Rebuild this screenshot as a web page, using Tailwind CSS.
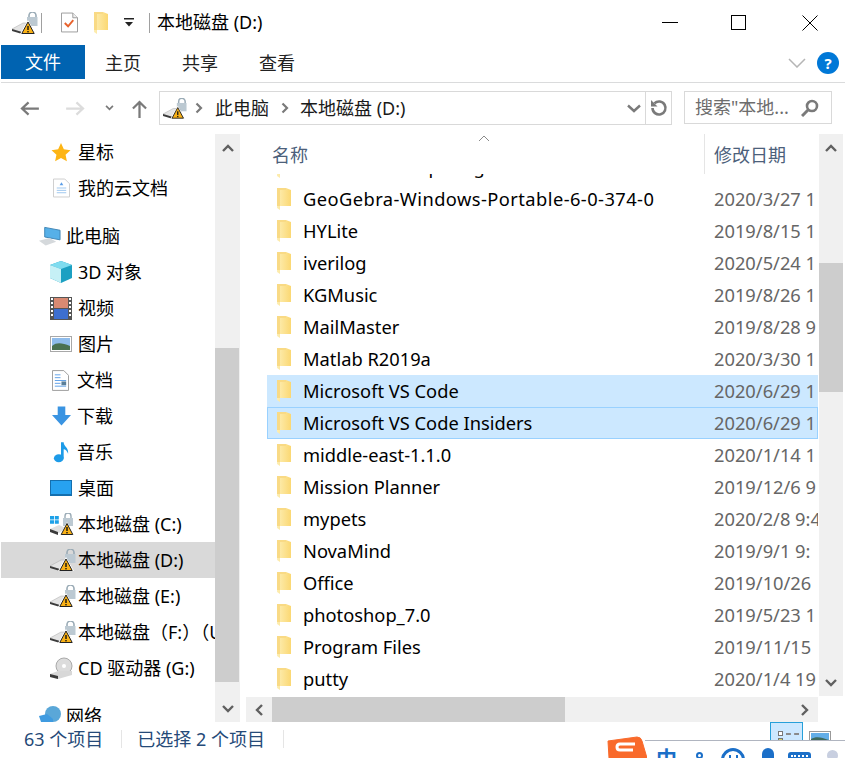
<!DOCTYPE html>
<html lang="zh-CN">
<head>
<meta charset="UTF-8">
<title>本地磁盘 (D:)</title>
<script src="https://cdn.jsdelivr.net/npm/@tailwindcss/browser@4"></script>
</head>
<body class="w-[845px] h-[758px] overflow-hidden bg-white font-['Noto_Sans','Noto_Sans_CJK_SC',sans-serif] text-[18px] text-black relative">

<!-- shared icons -->
<svg class="absolute w-0 h-0">
  <defs>
    <linearGradient id="folderFill" x1="0" y1="0" x2="1" y2="0"><stop offset="0" stop-color="#fdeeb4"/><stop offset="1" stop-color="#fbd873"/></linearGradient>
    <symbol id="folder" viewBox="0 0 14 22"><path d="M0 0h9l5 2v16H3v4l-3-2z" fill="url(#folderFill)"/><path d="M0 0h9v2H3v16H0z" fill="#f9da85"/></symbol>
    <symbol id="drive" viewBox="0 0 26 22">
      <path d="M17 6V3.500a3.500 3.500 0 0 1 7 0V6" fill="none" stroke="#9aabb6" stroke-width="1.600"/>
      <rect x="15" y="5" width="10.500" height="9" fill="#bcc9d2"/>
      <path d="M0 17l11-6h7l2 5-10 5z" fill="#e4e4e4" stroke="#a8a8a8" stroke-width=".5"/>
      <path d="M0 17l10 3v2L0 19z" fill="#3b3b3b"/>
      <path d="M16 8l8 14H8z" fill="#fff"/>
      <path d="M16 10l6.200 11.500H9.800z" fill="#f9b116" stroke="#222"/>
      <rect x="15.300" y="14" width="1.400" height="4" fill="#111"/><rect x="15.300" y="19" width="1.400" height="1.400" fill="#111"/>
    </symbol>
  </defs>
</svg>

<!-- title bar -->
<div class="h-[45px] flex items-center">
  <svg class="ml-[12px] w-[26px] h-[22px]"><use href="#drive"/></svg>
  <div class="ml-[3px] w-px h-[20px] bg-[#a0a0a0]"></div>
  <svg class="ml-[19px] w-[17px] h-[21px]" viewBox="0 0 18 21"><path d="M.5.500h12l5 5v15H.5z" fill="#fff" stroke="#999"/><path d="M12.500.5v5h5" fill="#eee" stroke="#999"/><path d="M4 11l3.500 3.500L13 8" fill="none" stroke="#e8622c" stroke-width="2"/></svg>
  <svg class="ml-[16px] w-[14px] h-[22px]"><use href="#folder"/></svg>
  <svg class="ml-[16px] w-[10px] h-[9px]" viewBox="0 0 10 9"><rect y="0" width="10" height="1.500" fill="#222"/><path d="M1 4h8L5 8.500z" fill="#222"/></svg>
  <div class="ml-[15px] w-px h-[20px] bg-[#a0a0a0]"></div>
  <span class="ml-[7px]">本地磁盘 (D:)</span>
  <div class="ml-auto flex items-center">
    <div class="w-[16px] h-px bg-black"></div>
    <div class="ml-[53px] w-[15px] h-[15px] border border-black"></div>
    <svg class="ml-[56px] mr-[27px] w-[16px] h-[16px]" viewBox="0 0 16 16"><path d="M.5.500l15 15M15.500.500l-15 15" stroke="#000"/></svg>
  </div>
</div>

<!-- ribbon tabs -->
<div class="h-[38px] ml-px border-b border-[#dadbdc] flex items-start relative">
  <div class="w-[84px] h-[34px] bg-[#0063b1] text-white flex items-center justify-center">文件</div>
  <span class="ml-[20px] mt-[5px] text-[#222]">主页</span>
  <span class="ml-[41px] mt-[5px] text-[#222]">共享</span>
  <span class="ml-[41px] mt-[5px] text-[#222]">查看</span>
  <svg class="absolute left-[787px] top-[13px] w-[18px] h-[10px]" viewBox="0 0 18 10"><path d="M1 1l8 8 8-8" fill="none" stroke="#b5b5b5" stroke-width="1.500"/></svg>
  <div class="absolute left-[816px] top-[7px] w-[22px] h-[22px] rounded-full bg-[#0078d7] text-white flex items-center justify-center text-[15px] font-bold">?</div>
</div>

<!-- address row -->
<div class="h-[47px] flex items-start pt-[8px]">
  <svg class="ml-[20px] mt-[10px] w-[19px] h-[15px]" viewBox="0 0 20 16"><path d="M20 8H2M9 1.500L2 8l7 6.500" fill="none" stroke="#7a7a7a" stroke-width="2.400"/></svg>
  <svg class="ml-[27px] mt-[10px] w-[19px] h-[15px]" viewBox="0 0 20 16"><path d="M0 8h18M11 1.500L18 8l-7 6.500" fill="none" stroke="#dcdcdc" stroke-width="2.400"/></svg>
  <svg class="ml-[20px] mt-[14px] w-[9px] h-[6px]" viewBox="0 0 10 7"><path d="M1 1l4 4 4-4" fill="none" stroke="#7a7a7a" stroke-width="2"/></svg>
  <svg class="ml-[18px] mt-[9px] w-[15px] h-[18px]" viewBox="0 0 16 19"><path d="M8 19V2M1 9l7-7 7 7" fill="none" stroke="#7a7a7a" stroke-width="2.400"/></svg>
  <div class="ml-[12px] w-[513px] h-[34px] border border-[#d9d9d9] flex items-center">
    <svg class="ml-[3px] w-[24px] h-[21px]"><use href="#drive"/></svg>
    <svg class="ml-[8px] w-[8px] h-[12px]" viewBox="0 0 8 12"><path d="M1.500 1.500L6 6l-4.500 4.500" fill="none" stroke="#7a7a7a" stroke-width="2.200"/></svg>
    <span class="ml-[12px] text-[#1a1a1a]">此电脑</span>
    <svg class="ml-[12px] w-[8px] h-[12px]" viewBox="0 0 8 12"><path d="M1.500 1.500L6 6l-4.500 4.500" fill="none" stroke="#7a7a7a" stroke-width="2.200"/></svg>
    <span class="ml-[11px] text-[#1a1a1a]">本地磁盘 (D:)</span>
    <svg class="ml-auto mr-[4px] w-[14px] h-[9px]" viewBox="0 0 14 9"><path d="M1 1.500L7 7l6-5.500" fill="none" stroke="#7a7a7a" stroke-width="2.400"/></svg>
    <div class="w-[26px] h-full border-l border-[#d9d9d9] flex items-center justify-center">
      <svg class="w-[18px] h-[18px]" viewBox="0 0 18 18"><path d="M4.400 4.400A6.500 6.500 0 1 1 2.500 9" fill="none" stroke="#7a7a7a" stroke-width="2.600"/><path d="M1 1v6.500h6.500z" fill="#7a7a7a"/></svg>
    </div>
  </div>
  <div class="ml-[12px] w-[148px] h-[33px] border border-[#d9d9d9] flex items-center">
    <span class="ml-[10px] text-[#6d6d6d]">搜索"本地...</span>
    <svg class="ml-auto mr-[12px] w-[18px] h-[18px]" viewBox="0 0 18 18"><circle cx="11" cy="7" r="5" fill="none" stroke="#7a7a7a" stroke-width="2.600"/><path d="M7 11l-6 6" stroke="#7a7a7a" stroke-width="3"/></svg>
  </div>
</div>

<!-- body -->
<div class="h-[588px] flex mt-[4px]">
  <!-- nav pane -->
  <div class="w-[240px] shrink-0 flex">
    <div class="w-[215px] h-full overflow-hidden pl-px whitespace-nowrap">
      <div class="h-[36px] flex items-center pl-[50px]"><svg class="w-[20px] h-[19px] mr-[7px]" viewBox="0 0 20 20"><path d="M10 0l3 6.700 7 .8-5.200 4.800 1.400 7L10 15.800 3.800 19.300l1.400-7L0 7.500l7-.8z" fill="#fdb515"/></svg>星标</div>
      <div class="h-[36px] flex items-center pl-[52px]"><svg class="w-[17px] h-[20px] mr-[8px]" viewBox="0 0 18 20"><path d="M.5.500h12l5 5v14H.5z" fill="#fff" stroke="#ccc"/><path d="M4 10h10M4 12.500h10M4 15h10" stroke="#9cc6ee"/><path d="M7 7l2-3 2 3z" fill="#5b9ee8"/></svg>我的云文档</div>
      <div class="h-[12px]"></div>
      <div class="h-[36px] flex items-center pl-[37px]"><svg class="w-[23px] h-[20px] mr-[5px]" viewBox="0 0 24 20"><path d="M7 1l16 3v10l-16-3z" fill="#56b0e8" stroke="#3f85b5"/><path d="M1 15l11-3 7 4-11 4z" fill="#d5d9dc"/></svg>此电脑</div>
      <div class="h-[36px] flex items-center pl-[49px]"><svg class="w-[22px] h-[22px] mr-[6px]" viewBox="0 0 22 22"><path d="M11 0l11 4v13l-11 5-11-5V4z" fill="#1ca0c2"/><path d="M11 0l11 4-11 4L0 4z" fill="#7fdcef"/><path d="M0 4l11 4v14L0 17z" fill="#c6f0f6"/></svg>3D 对象</div>
      <div class="h-[36px] flex items-center pl-[49px]"><svg class="w-[22px] h-[23px] mr-[6px]" viewBox="0 0 22 23"><rect width="22" height="23" fill="#555"/><rect x="4" y="1" width="14" height="10" fill="#d98a72"/><rect x="4" y="12" width="14" height="10" fill="#3d6fd0"/><path d="M1 2h2M1 6h2M1 10h2M1 14h2M1 18h2M19 2h2M19 6h2M19 10h2M19 14h2M19 18h2" stroke="#fff" stroke-width="2"/></svg>视频</div>
      <div class="h-[36px] flex items-center pl-[49px]"><svg class="w-[22px] h-[16px] mr-[6px]" viewBox="0 0 22 16"><rect x=".5" y=".5" width="21" height="15" fill="#fff" stroke="#a8a8a8"/><rect x="2" y="2" width="18" height="12" fill="#8fbcec"/><path d="M2 10c5-4 10-3 18 0v4H2z" fill="#4a7152"/></svg>图片</div>
      <div class="h-[36px] flex items-center pl-[51px]"><svg class="w-[17px] h-[21px] mr-[8px]" viewBox="0 0 18 22"><path d="M.5.500h12l5 5v16H.5z" fill="#fff" stroke="#999"/><path d="M3 5h6M3 8h6M3 11h12M3 14h6M3 17h12" stroke="#5b9ee8"/><rect x="10" y="12" width="5" height="4" fill="#5a7f99"/></svg>文档</div>
      <div class="h-[36px] flex items-center pl-[51px]"><svg class="w-[19px] h-[20px] mr-[6px]" viewBox="0 0 20 20"><path d="M6 0h8v9h6L10 20 0 9h6z" fill="#3a94e2"/></svg>下载</div>
      <div class="h-[36px] flex items-center pl-[52px]"><svg class="w-[16px] h-[22px] mr-[8px]" viewBox="0 0 18 24"><ellipse cx="6.500" cy="19" rx="5.500" ry="4.500" fill="#1d9be8"/><path d="M9 1h3c0 5 6 6 5 13-1-3-3-5-5-5v10H9z" fill="#1d9be8"/></svg>音乐</div>
      <div class="h-[36px] flex items-center pl-[49px]"><svg class="w-[22px] h-[16px] mr-[6px]" viewBox="0 0 22 16"><rect width="22" height="16" fill="#146fae"/><rect x="1" y="1" width="20" height="13" fill="#27a2f0"/></svg>桌面</div>
      <div class="h-[36px] flex items-center pl-[49px]"><svg class="w-[24px] h-[22px] mr-[4px]" viewBox="0 0 24 22"><path d="M0 16l9-4 7 3-7 5-9-2z" fill="#e0e0e0"/><path d="M0 16l8 3v3l-8-3z" fill="#3b3b3b"/><path d="M0 3h4v3.500H0zM4.800 3h4v3.500h-4zM0 7.300h4v3.500H0zM4.800 7.300h4v3.500h-4z" fill="#1da1e8"/><path d="M15 5V3a3 3 0 0 1 6 0v2" fill="none" stroke="#9aabb6" stroke-width="1.400"/><rect x="13" y="5" width="10" height="8" fill="#bcc9d2"/><path d="M17 9l7 13H10z" fill="#fff"/><path d="M17 10.500l5.800 11H11.200z" fill="#f9b116" stroke="#222"/><rect x="16.300" y="14" width="1.400" height="4" fill="#111"/><rect x="16.300" y="19" width="1.400" height="1.400" fill="#111"/></svg>本地磁盘 (C:)</div>
      <div class="h-[36px] flex items-center pl-[50px] bg-[#d9d9d9]"><svg class="w-[26px] h-[22px] mr-[2px] -ml-px"><use href="#drive"/></svg>本地磁盘 (D:)</div>
      <div class="h-[36px] flex items-center pl-[49px]"><svg class="w-[26px] h-[22px] mr-[2px]"><use href="#drive"/></svg>本地磁盘 (E:)</div>
      <div class="h-[36px] flex items-center pl-[49px]"><svg class="w-[26px] h-[22px] mr-[2px] shrink-0"><use href="#drive"/></svg><span>本地磁盘（F:）（U</span></div>
      <div class="h-[36px] flex items-center pl-[49px]"><svg class="w-[24px] h-[22px] mr-[4px]" viewBox="0 0 24 22"><circle cx="14" cy="9" r="8" fill="#dcdcdc" stroke="#aaa"/><circle cx="14" cy="9" r="2" fill="#fff"/><path d="M0 17l8-3h14v4l-14 4-8-2z" fill="#d8d8d8"/><path d="M0 17l8 2v3l-8-2z" fill="#3b3b3b"/></svg>CD 驱动器 (G:)</div>
      <div class="h-[12px]"></div>
      <div class="h-[36px] flex items-center pl-[38px]"><svg class="w-[22px] h-[20px] mr-[5px]" viewBox="0 0 22 20"><circle cx="14" cy="8" r="8" fill="#5aa7d8"/><path d="M0 10l8-2 6 5v6H3z" fill="#3f9be0"/></svg>网络</div>
    </div>
    <!-- nav scrollbar -->
    <div class="w-[25px] h-full bg-[#f0f0f0] flex flex-col">
      <div class="h-[28px] flex items-center justify-center"><svg class="w-[12px] h-[8px]" viewBox="0 0 12 8"><path d="M1 7l5-5 5 5" fill="none" stroke="#606060" stroke-width="2.400"/></svg></div>
      <div class="h-[186px]"></div>
      <div class="h-[334px] bg-[#cdcdcd] w-[24px]"></div>
      <div class="flex-1 flex items-end justify-center pb-[9px]"><svg class="w-[12px] h-[8px]" viewBox="0 0 12 8"><path d="M1 1l5 5 5-5" fill="none" stroke="#606060" stroke-width="2.400"/></svg></div>
    </div>
  </div>

  <!-- file list -->
  <div class="w-[605px] pl-[6px] flex flex-col">
    <div class="flex-1 flex min-h-0">
      <div class="flex-1 min-w-0 flex flex-col overflow-hidden">
        <div class="h-[40px] shrink-0 flex relative text-[#4c607a]">
          <span class="ml-[26px] mt-[8px]">名称</span>
          <svg class="absolute left-[232px] top-[1px] w-[12px] h-[7px]" viewBox="0 0 12 7"><path d="M1 6l5-5 5 5" fill="none" stroke="#8a8a8a"/></svg>
          <div class="absolute left-[458px] top-0 h-full w-px bg-[#e5e5e5]"></div>
          <span class="absolute left-[468px] top-[8px] whitespace-nowrap">修改日期</span>
        </div>
        <div id="rows" class="flex-1 overflow-hidden text-[18.3px]"></div>
      </div>
      <!-- vertical scrollbar -->
      <div class="w-[24px] ml-px mr-[2px] bg-[#f0f0f0] flex flex-col">
        <div class="h-[28px] flex items-center justify-center"><svg class="w-[12px] h-[8px]" viewBox="0 0 12 8"><path d="M1 7l5-5 5 5" fill="none" stroke="#606060" stroke-width="2.400"/></svg></div>
        <div class="h-[101px]"></div>
        <div class="h-[129px] bg-[#cdcdcd]"></div>
        <div class="flex-1 flex items-end justify-center pb-[9px]"><svg class="w-[12px] h-[8px]" viewBox="0 0 12 8"><path d="M1 1l5 5 5-5" fill="none" stroke="#606060" stroke-width="2.400"/></svg></div>
      </div>
    </div>
    <!-- horizontal scrollbar -->
    <div class="h-[25px] w-[572px] mt-px shrink-0 bg-[#f0f0f0] flex items-center">
      <div class="w-[26px] flex justify-center"><svg class="w-[8px] h-[12px]" viewBox="0 0 8 12"><path d="M7 1L2 6l5 5" fill="none" stroke="#606060" stroke-width="2.400"/></svg></div>
      <div class="w-[293px] h-full bg-[#cdcdcd]"></div>
      <div class="ml-auto w-[26px] flex justify-center"><svg class="w-[8px] h-[12px]" viewBox="0 0 8 12"><path d="M1 1l5 5-5 5" fill="none" stroke="#606060" stroke-width="2.400"/></svg></div>
    </div>
  </div>
</div>

<!-- status bar -->
<div class="h-[36px] flex items-start text-[#254a78] pt-[4px]">
  <span class="ml-[24px]">63 个项目</span>
  <div class="ml-[18px] mt-[4px] w-px h-[18px] bg-[#e5e5e5]"></div>
  <span class="ml-[15px]">已选择 2 个项目</span>
  <div class="ml-[18px] mt-[4px] w-px h-[18px] bg-[#e5e5e5]"></div>
</div>

<!-- view buttons -->
<div class="absolute left-[770px] top-[722px] w-[33px] h-[30px] bg-[#cce8ff] border border-[#26a0da] pl-[7px] pr-[3px] pt-[8px] flex flex-col gap-[2px]">
  <div class="flex items-center gap-[3px]"><span class="w-[5px] h-[5px] bg-white border border-[#777]"></span><span class="flex-1 h-px border-t-2 border-dashed border-[#8a8a8a]"></span></div>
  <div class="flex items-center gap-[3px]"><span class="w-[5px] h-[5px] bg-[#d9d26a] border border-[#777]"></span><span class="flex-1 h-px border-t-2 border-dashed border-[#8a8a8a]"></span></div>
</div>
<svg class="absolute left-[809px] top-[731px] w-[22px] h-[20px]" viewBox="0 0 22 20"><rect x=".5" y=".5" width="21" height="19" fill="#fff" stroke="#999"/><rect x="2" y="2" width="18" height="10" fill="#63aee8"/><path d="M2 8c5-3 10-2 18 1v11H2z" fill="#3f6b5f"/></svg>

<!-- IME bar lying over the window -->
<div class="absolute left-[645px] top-[740px] w-[200px] h-[18px] bg-white border-t border-[#b0b5c0] overflow-hidden flex items-start">
  <span class="ml-[11px] mt-[7px] text-[21px] leading-[21px] font-bold text-[#1b6fc8]">中</span>
  <span class="ml-[19px] mt-[11px] w-[7px] h-[7px] rounded-full border-2 border-[#1b6fc8]"></span>
  <span class="ml-[18px] mt-[7px] w-[24px] h-[24px] rounded-full border-[3px] border-[#1b6fc8] flex justify-center gap-[5px] pt-[4px]"><span class="w-[2px] h-[5px] bg-[#1b6fc8]"></span><span class="w-[2px] h-[5px] bg-[#1b6fc8]"></span></span>
  <span class="ml-[17px] mt-[7px] w-[12px] h-[18px] rounded-t-full bg-[#1b6fc8]"></span>
  <span class="ml-[14px] mt-[11px] w-[23px] h-[14px] rounded-t-[3px] bg-[#1b6fc8] pt-[3px] px-[3px]"><span class="block h-[2px] border-t-2 border-dotted border-white"></span></span>
  <span class="ml-[16px] mt-[9px] w-[11px] h-[11px] rounded-full bg-[#c8cfe0]"></span>
</div>
<svg class="absolute left-[605px] top-[736px] w-[42px] h-[22px]" viewBox="0 0 42 22"><path d="M3 5L32 1q4 0 5 4l5 17H4z" fill="#f96a2b" stroke="#f96a2b" stroke-linejoin="round"/><path d="M30 8H15q-3 0-3 3t3 3h13" fill="none" stroke="#fff" stroke-width="3"/></svg>

<script>
  const rows = [
    ['GeoGebra-5-0-paring', '2020/3/27 1'],
    ['GeoGebra-Windows-Portable-6-0-374-0', '2020/3/27 1'],
    ['HYLite', '2019/8/15 1'],
    ['iverilog', '2020/5/24 1'],
    ['KGMusic', '2019/8/26 1'],
    ['MailMaster', '2019/8/28 9'],
    ['Matlab R2019a', '2020/3/30 1'],
    ['Microsoft VS Code', '2020/6/29 1'],
    ['Microsoft VS Code Insiders', '2020/6/29 1'],
    ['middle-east-1.1.0', '2020/1/14 1'],
    ['Mission Planner', '2019/12/6 9'],
    ['mypets', '2020/2/8 9:4'],
    ['NovaMind', '2019/9/1 9:'],
    ['Office', '2019/10/26'],
    ['photoshop_7.0', '2019/5/23 1'],
    ['Program Files', '2019/11/15'],
    ['putty', '2020/1/4 19']
  ];
  const rowClass = {
    7: 'h-[32px] flex items-center ml-[21px] pl-[10px] bg-[#cce8ff]',
    8: 'h-[32px] flex items-center ml-[21px] pl-[9px] bg-[#cce8ff] border border-[#99d1ff]'
  };
  document.getElementById('rows').innerHTML = rows.map(([name, date], i) => `
    <div class="${rowClass[i] || 'h-[32px] flex items-center pl-[31px]'} ${i === 0 ? '-mt-[23px]' : ''}">
      <svg class="w-[14px] h-[22px] mr-[12px] shrink-0"><use href="#folder"/></svg>
      <span class="flex-1 whitespace-nowrap ${i === 1 ? 'tracking-[0.44px]' : ''}">${name}</span>
      <span class="${i === 8 ? 'w-[103px]' : 'w-[104px]'} shrink-0 text-[#666] whitespace-nowrap overflow-hidden">${date}</span>
    </div>`).join('');
</script>
</body>
</html>
